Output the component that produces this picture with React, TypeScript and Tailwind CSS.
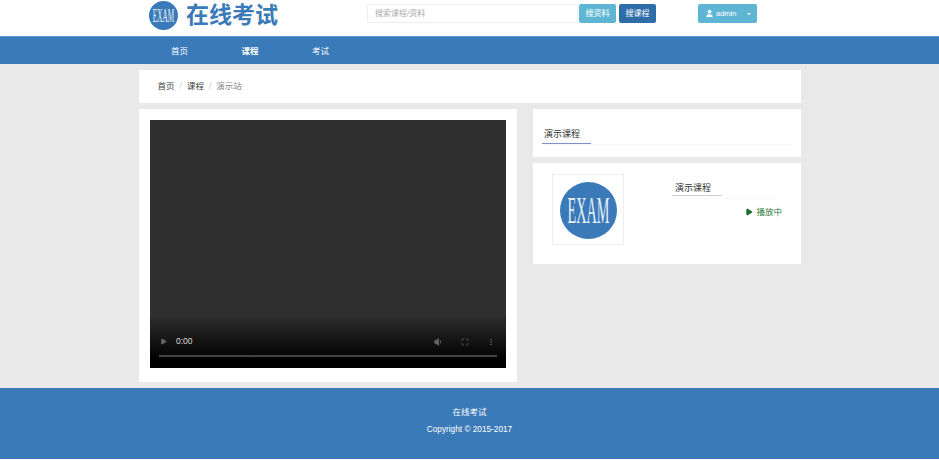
import { Maximize, MoreVertical, Play, User, Volume1 } from 'lucide-react';

const font = { fontFamily: '"Liberation Sans", "Noto Sans CJK SC", sans-serif' };

function ExamLogo({ size }: { size: number }) {
  return (
    <svg width={size} height={size} viewBox="0 0 60 60">
      <circle cx="30" cy="30" r="30" fill="#3a7ab8" />
      {/* tall condensed lettering like the original logo image */}
      <text
        transform="translate(30 43) scale(1 2.6)"
        textAnchor="middle"
        fill="#e8f0f8"
        fontSize="15"
        fontFamily='"Liberation Serif", serif'
      >
        EXAM
      </text>
    </svg>
  );
}

export default function App() {
  return (
    <div className="min-h-[460px] w-[939px] bg-white text-[#333]" style={font}>
      {/* Header */}
      <header className="h-[36px] bg-white">
        <div className="flex h-full">
          <div className="ml-[149px] flex h-[30px] w-[218px] items-center gap-[8px]">
            <ExamLogo size={29} />
            <span className="text-[23px] leading-none font-bold text-[#3a7ab8]">在线考试</span>
          </div>
          <div className="flex pt-[4px]">
            <input
              placeholder="搜索课程/资料"
              className="h-[19px] w-[211px] rounded-[2px] border border-[#eeeeee] bg-white px-[7px] text-[8px] placeholder:text-[#aaa]"
            />
            <button className="ml-[1px] h-[19px] w-[37px] rounded-[2px] bg-[#5fb6d4] text-[8px] text-white">
              搜资料
            </button>
            <button className="ml-[3px] h-[19px] w-[37px] rounded-[2px] bg-[#2f6da8] text-[8px] text-white">
              搜课程
            </button>
            <div className="ml-[42px] flex h-[19px] w-[59px] items-center rounded-[2px] bg-[#5fb6d4] text-[7.5px] text-white">
              <User size={9} className="ml-[7px] fill-white" />
              <span className="ml-[2px]">admin</span>
              <span className="mr-[6px] ml-auto h-0 w-0 border-x-[2px] border-t-[2px] border-x-transparent border-t-white" />
            </div>
          </div>
        </div>
      </header>

      {/* Nav */}
      <nav className="flex h-[28px] items-center border-t border-[#5b9bd5] bg-[#3a7ab8] pt-[1px] pl-[171px] text-[8.5px] text-white">
        <span className="w-[70.5px]">首页</span>
        <span className="w-[70.5px] font-bold">课程</span>
        <span>考试</span>
      </nav>

      <main className="bg-[#e9e9e9] py-[6px] pl-[139px]">
        {/* Breadcrumb */}
        <div className="flex h-[33px] w-[662px] items-center bg-white pl-[18.5px] text-[8.5px]">
          <span className="text-[#444]">首页</span>
          <span className="mx-[5px] text-[#ccc]">/</span>
          <span className="text-[#444]">课程</span>
          <span className="mx-[5px] text-[#ccc]">/</span>
          <span className="text-[#888]">演示站</span>
        </div>

        <div className="mt-[6px] flex items-start">
          {/* Video */}
          <div className="h-[273px] w-[378px] bg-white p-[11px]">
            <div className="flex h-[248px] w-[356px] flex-col justify-end bg-[linear-gradient(to_bottom,#2f2f2f_0,#2f2f2f_195px,#000_240px)]">
              <div className="flex items-center px-[10px] text-[#666]">
                <Play size={7} className="fill-[#666]" />
                <span className="ml-[9px] text-[8.5px] text-[#ddd]">0:00</span>
                <Volume1 size={10} className="mr-[17px] ml-auto fill-[#666]" />
                <Maximize size={8} className="mr-[18px]" />
                <MoreVertical size={8} className="mr-[1px]" />
              </div>
              <div className="mx-[9px] mt-[7px] mb-[11px] h-[2px] bg-[#444]" />
            </div>
          </div>

          <div className="ml-[16px] flex w-[268px] flex-col gap-[6px]">
            {/* Course title */}
            <div className="h-[48px] bg-white px-[9px] pt-[11px]">
              <div className="border-b border-[#f8f8f8]">
                <span className="-mb-px inline-block w-[49px] border-b border-[#7f8fc8] pb-[2px] pl-[2px] text-[9px] leading-[13px]">
                  演示课程
                </span>
              </div>
            </div>

            {/* Course item */}
            <div className="flex h-[101px] bg-white">
              <div className="mt-[11px] ml-[19px] flex h-[71px] w-[72px] items-center justify-center border border-[#eee] pt-[2px]">
                <ExamLogo size={57} />
              </div>
              <div className="ml-[48px] flex-1 pt-[11px] pr-[19px]">
                <div className="border-b border-[#f8f8f8]">
                  <span className="-mb-px inline-block h-[14px] w-[50px] border-b border-[#ccc] pl-[3px] text-[9px] leading-[13px]">
                    演示课程
                  </span>
                </div>
                <div className="mt-[7px] flex items-center justify-end text-[8.5px] text-[#2f7a3a]">
                  <Play size={8} className="mr-[3px] fill-[#1f6b2b] text-[#1f6b2b]" />
                  播放中
                </div>
              </div>
            </div>
          </div>
        </div>
      </main>

      {/* Footer */}
      <footer className="flex h-[71px] flex-col items-center bg-[#3a7ab8] pt-[19px] text-[8.25px] text-white">
        <div className="h-[10px] text-[8.5px] leading-[10px]">在线考试</div>
        <div className="mt-[8px] leading-[10px]">Copyright © 2015-2017</div>
      </footer>
    </div>
  );
}
